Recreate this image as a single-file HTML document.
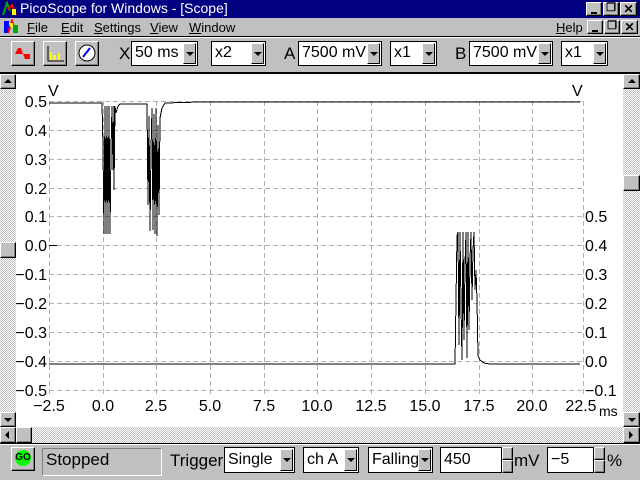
<!DOCTYPE html>
<html><head><meta charset="utf-8"><style>
*{margin:0;padding:0;box-sizing:border-box}
body{width:640px;height:480px;overflow:hidden;background:#c0c0c0;font-family:"Liberation Sans",sans-serif;position:relative}
.a{position:absolute}
.btn{position:absolute;background:#c0c0c0;border:1px solid;border-color:#fff #000 #000 #fff;box-shadow:inset -1px -1px 0 #808080}
.combo{position:absolute;background:#fff;border:1px solid #000;font-size:16px;line-height:22px;padding-left:3px;color:#000;overflow:hidden;white-space:nowrap}
.combo .dd{position:absolute;right:1px;top:1px;width:13px;height:21px;background:#c0c0c0;border:1px solid;border-color:#fff #000 #000 #fff}
.dd:after{content:"";position:absolute;left:2px;top:8px;border-left:4px solid transparent;border-right:4px solid transparent;border-top:4px solid #000}
.hatch{background-color:#c0c0c0;background-image:repeating-conic-gradient(#fff 0 25%,#c0c0c0 0 50%);background-size:2px 2px}
.lbl{position:absolute;font-size:17px;color:#000}
</style></head><body>
<div class="a" style="left:0;top:0;width:640px;height:18px;background:#000080"></div>
<svg class="a" style="left:2px;top:1px" width="16" height="16"><path d="M1 14 L5 2 L8 10" stroke="#0a0" stroke-width="2" fill="none"/><path d="M6 8 L10 4 L14 14" stroke="#f00" stroke-width="2" fill="none"/><rect x="10" y="8" width="4" height="6" fill="#ff0"/></svg>
<div class="a" style="left:20px;top:0px;color:#fff;font-size:14px">PicoScope for Windows - [Scope]</div>
<div class="btn" style="left:586px;top:2px;width:16px;height:14px"><div class="a" style="left:4px;top:9px;width:6px;height:2px;background:#000"></div></div>
<div class="btn" style="left:603px;top:2px;width:16px;height:14px;font-size:11px;text-align:center;line-height:11px;font-weight:bold">&#x2750;</div>
<div class="btn" style="left:620px;top:2px;width:17px;height:14px;font-size:12px;text-align:center;line-height:12px;font-weight:bold">✕</div>
<svg class="a" style="left:4px;top:19px" width="16" height="16"><rect x="0" y="2" width="5" height="12" fill="#00f"/><path d="M4 14 L8 2 L12 14" stroke="#f00" stroke-width="2" fill="none"/><rect x="9" y="6" width="5" height="8" fill="#0a0"/><rect x="6" y="4" width="3" height="4" fill="#ff0"/></svg>
<div class="a" style="left:27px;top:20px;font-size:13px"><u>F</u>ile</div>
<div class="a" style="left:61px;top:20px;font-size:13px"><u>E</u>dit</div>
<div class="a" style="left:94px;top:20px;font-size:13px"><u>S</u>ettings</div>
<div class="a" style="left:150px;top:20px;font-size:13px"><u>V</u>iew</div>
<div class="a" style="left:189px;top:20px;font-size:13px"><u>W</u>indow</div>
<div class="a" style="left:556px;top:20px;font-size:13px"><u>H</u>elp</div>
<div class="btn" style="left:587px;top:20px;width:16px;height:14px"><div class="a" style="left:4px;top:9px;width:6px;height:2px;background:#000"></div></div>
<div class="btn" style="left:604px;top:20px;width:16px;height:14px;font-size:11px;text-align:center;line-height:11px;font-weight:bold">&#x2750;</div>
<div class="btn" style="left:621px;top:20px;width:17px;height:14px;font-size:12px;text-align:center;line-height:12px;font-weight:bold">✕</div>
<div class="a" style="left:0;top:36px;width:640px;height:1px;background:#000"></div>
<div class="a" style="left:0;top:37px;width:640px;height:1px;background:#fff"></div>
<div class="a" style="left:0;top:72px;width:640px;height:2px;background:#000"></div>
<div class="btn" style="left:11px;top:41px;width:24px;height:25px"><svg width="22" height="23"><path d="M3 12 L6 6 L9 6 L11 12 Z" fill="#f00"/><path d="M11 12 L13 17 L18 17 L18 12 Z" fill="#f00"/></svg></div>
<div class="btn" style="left:43px;top:41px;width:24px;height:25px"><svg width="22" height="23"><path d="M4 4 V19 H20" stroke="#000" fill="none"/><rect x="6" y="10" width="2" height="8" fill="#ff0"/><rect x="9" y="13" width="3" height="5" fill="#ff0"/><rect x="14" y="11" width="2" height="7" fill="#ff0"/></svg></div>
<div class="btn" style="left:75px;top:41px;width:24px;height:25px"><svg width="22" height="23"><circle cx="11" cy="11" r="8" fill="#fff" stroke="#000"/><path d="M7 15 L14 6" stroke="#00f" stroke-width="2"/></svg></div>
<div class="lbl" style="left:119px;top:44px">X</div>
<div class="combo" style="left:131px;top:41px;width:67px;height:25px">50 ms<div class="dd"></div></div>
<div class="combo" style="left:211px;top:41px;width:55px;height:25px">x2<div class="dd"></div></div>
<div class="lbl" style="left:284px;top:44px">A</div>
<div class="combo" style="left:298px;top:41px;width:84px;height:25px">7500 mV<div class="dd"></div></div>
<div class="combo" style="left:390px;top:41px;width:47px;height:25px">x1<div class="dd"></div></div>
<div class="lbl" style="left:455px;top:44px">B</div>
<div class="combo" style="left:469px;top:41px;width:84px;height:25px">7500 mV<div class="dd"></div></div>
<div class="combo" style="left:561px;top:41px;width:47px;height:25px">x1<div class="dd"></div></div>
<div class="a" style="left:16px;top:74px;width:607px;height:353px;background:#fff"></div>
<div class="a hatch" style="left:0;top:74px;width:16px;height:353px"></div>
<div class="a hatch" style="left:623px;top:74px;width:17px;height:353px"></div>
<div class="btn" style="left:0;top:74px;width:16px;height:15px"><div class="a" style="left:3px;top:4px;border-left:4px solid transparent;border-right:4px solid transparent;border-bottom:4px solid #000"></div></div>
<div class="btn" style="left:0;top:242px;width:16px;height:16px"></div>
<div class="btn" style="left:0;top:412px;width:16px;height:15px"><div class="a" style="left:3px;top:5px;border-left:4px solid transparent;border-right:4px solid transparent;border-top:4px solid #000"></div></div>
<div class="btn" style="left:623px;top:74px;width:17px;height:15px"><div class="a" style="left:4px;top:4px;border-left:4px solid transparent;border-right:4px solid transparent;border-bottom:4px solid #000"></div></div>
<div class="btn" style="left:623px;top:175px;width:17px;height:16px"></div>
<div class="btn" style="left:623px;top:412px;width:17px;height:15px"><div class="a" style="left:4px;top:5px;border-left:4px solid transparent;border-right:4px solid transparent;border-top:4px solid #000"></div></div>
<div class="a hatch" style="left:0;top:427px;width:640px;height:16px"></div>
<div class="btn" style="left:0;top:427px;width:16px;height:16px"><div class="a" style="left:4px;top:3px;border-top:4px solid transparent;border-bottom:4px solid transparent;border-right:4px solid #000"></div></div>
<div class="btn" style="left:16px;top:427px;width:16px;height:16px"></div>
<div class="btn" style="left:623px;top:427px;width:17px;height:16px"><div class="a" style="left:5px;top:3px;border-top:4px solid transparent;border-bottom:4px solid transparent;border-left:4px solid #000"></div></div>
<svg class="a" style="left:0;top:0" width="640" height="480" font-family="Liberation Sans, sans-serif" font-size="16">
<g stroke="#b0b0b0" stroke-dasharray="5,3" stroke-width="1" shape-rendering="crispEdges">
<path d="M49.5 101V394M103.5 101V394M156.5 101V394M210.5 101V394M264.5 101V394M317.5 101V394M371.5 101V394M425.5 101V394M479.5 101V394M532.5 101V394M583.5 101V394"/>
<path d="M49 101.5H584M49 130.5H584M49 159.5H584M49 188.5H584M49 216.5H584M49 245.5H584M49 274.5H584M49 303.5H584M49 332.5H584M49 361.5H584M49 390.5H584"/>
</g>
<g fill="#000" text-anchor="end">
<text x="47" y="107">0.5</text><text x="47" y="136">0.4</text><text x="47" y="165">0.3</text><text x="47" y="194">0.2</text><text x="47" y="222">0.1</text><text x="47" y="251">0.0</text><text x="47" y="280">−0.1</text><text x="47" y="309">−0.2</text><text x="47" y="338">−0.3</text><text x="47" y="367">−0.4</text><text x="47" y="396">−0.5</text>
</g>
<g fill="#000">
<text x="585" y="222">0.5</text><text x="585" y="251">0.4</text><text x="585" y="280">0.3</text><text x="585" y="309">0.2</text><text x="585" y="338">0.1</text><text x="585" y="367">0.0</text><text x="585" y="396">−0.1</text>
<text x="48" y="96">V</text><text x="572" y="96">V</text><text x="599" y="416" font-size="14">ms</text>
</g>
<g fill="#000" text-anchor="middle">
<text x="49" y="411">−2.5</text><text x="103" y="411">0.0</text><text x="156" y="411">2.5</text><text x="210" y="411">5.0</text><text x="264" y="411">7.5</text><text x="317" y="411">10.0</text><text x="371" y="411">12.5</text><text x="425" y="411">15.0</text><text x="479" y="411">17.5</text><text x="532" y="411">20.0</text><text x="581" y="411">22.5</text>
</g>
<path d="M49 245.5H57" stroke="#000" shape-rendering="crispEdges"/>
<g shape-rendering="crispEdges">
<polyline fill="none" stroke="#000" stroke-width="1" points="49,103 102,103 103,148 104,234 105,106 106,234 107,106 108,234 109,106 110,234 111,150 112,106 113,170 114,106 114,190 115,106 116,113 118,106 120,104 147,104 148,205 149,116 150,231 151,150 152,108 153,230 154,114 155,234 156,108 157,236 158,125 159,215 160,118 162,108 165,103 200,102 580,102"/>
<polyline fill="none" stroke="#000" stroke-width="1" points="49,364 455,364 456,300 457,236 458,232 459,345 460,232 461,305 462,360 463,232 464,340 465,265 466,232 467,358 468,232 469,330 470,260 471,232 472,300 473,250 474,232 475,290 476,270 477,300 478,356 480,360 484,363 490,364 580,364"/>
</g>
</svg>
<div class="a" style="left:0;top:443px;width:640px;height:1px;background:#000"></div>
<div class="a" style="left:0;top:444px;width:640px;height:1px;background:#fff"></div>
<div class="btn" style="left:11px;top:447px;width:24px;height:24px"><div class="a" style="left:3px;top:2px;width:16px;height:16px;border-radius:50%;background:#0f0;font-size:10px;line-height:16px;text-align:center;font-weight:bold">GO</div></div>
<div class="a" style="left:42px;top:448px;width:120px;height:28px;border:1px solid;border-color:#808080 #fff #fff #808080;font-size:17px;padding:1px 3px">Stopped</div>
<div class="lbl" style="left:170px;top:451px">Trigger</div>
<div class="combo" style="left:224px;top:447px;width:71px;height:26px;line-height:24px">Single<div class="dd" style="height:22px"></div></div>
<div class="combo" style="left:303px;top:447px;width:56px;height:26px;line-height:24px">ch A<div class="dd" style="height:22px"></div></div>
<div class="combo" style="left:368px;top:447px;width:65px;height:26px;line-height:24px">Falling<div class="dd" style="height:22px"></div></div>
<div class="combo" style="left:440px;top:447px;width:62px;height:26px;line-height:24px">450</div>
<div class="btn" style="left:502px;top:447px;width:11px;height:13px"></div>
<div class="btn" style="left:502px;top:460px;width:11px;height:13px"></div>
<div class="lbl" style="left:514px;top:451px">mV</div>
<div class="combo" style="left:547px;top:447px;width:47px;height:26px;line-height:24px">−5</div>
<div class="btn" style="left:594px;top:447px;width:11px;height:13px"></div>
<div class="btn" style="left:594px;top:460px;width:11px;height:13px"></div>
<div class="lbl" style="left:607px;top:451px">%</div>
</body></html>
